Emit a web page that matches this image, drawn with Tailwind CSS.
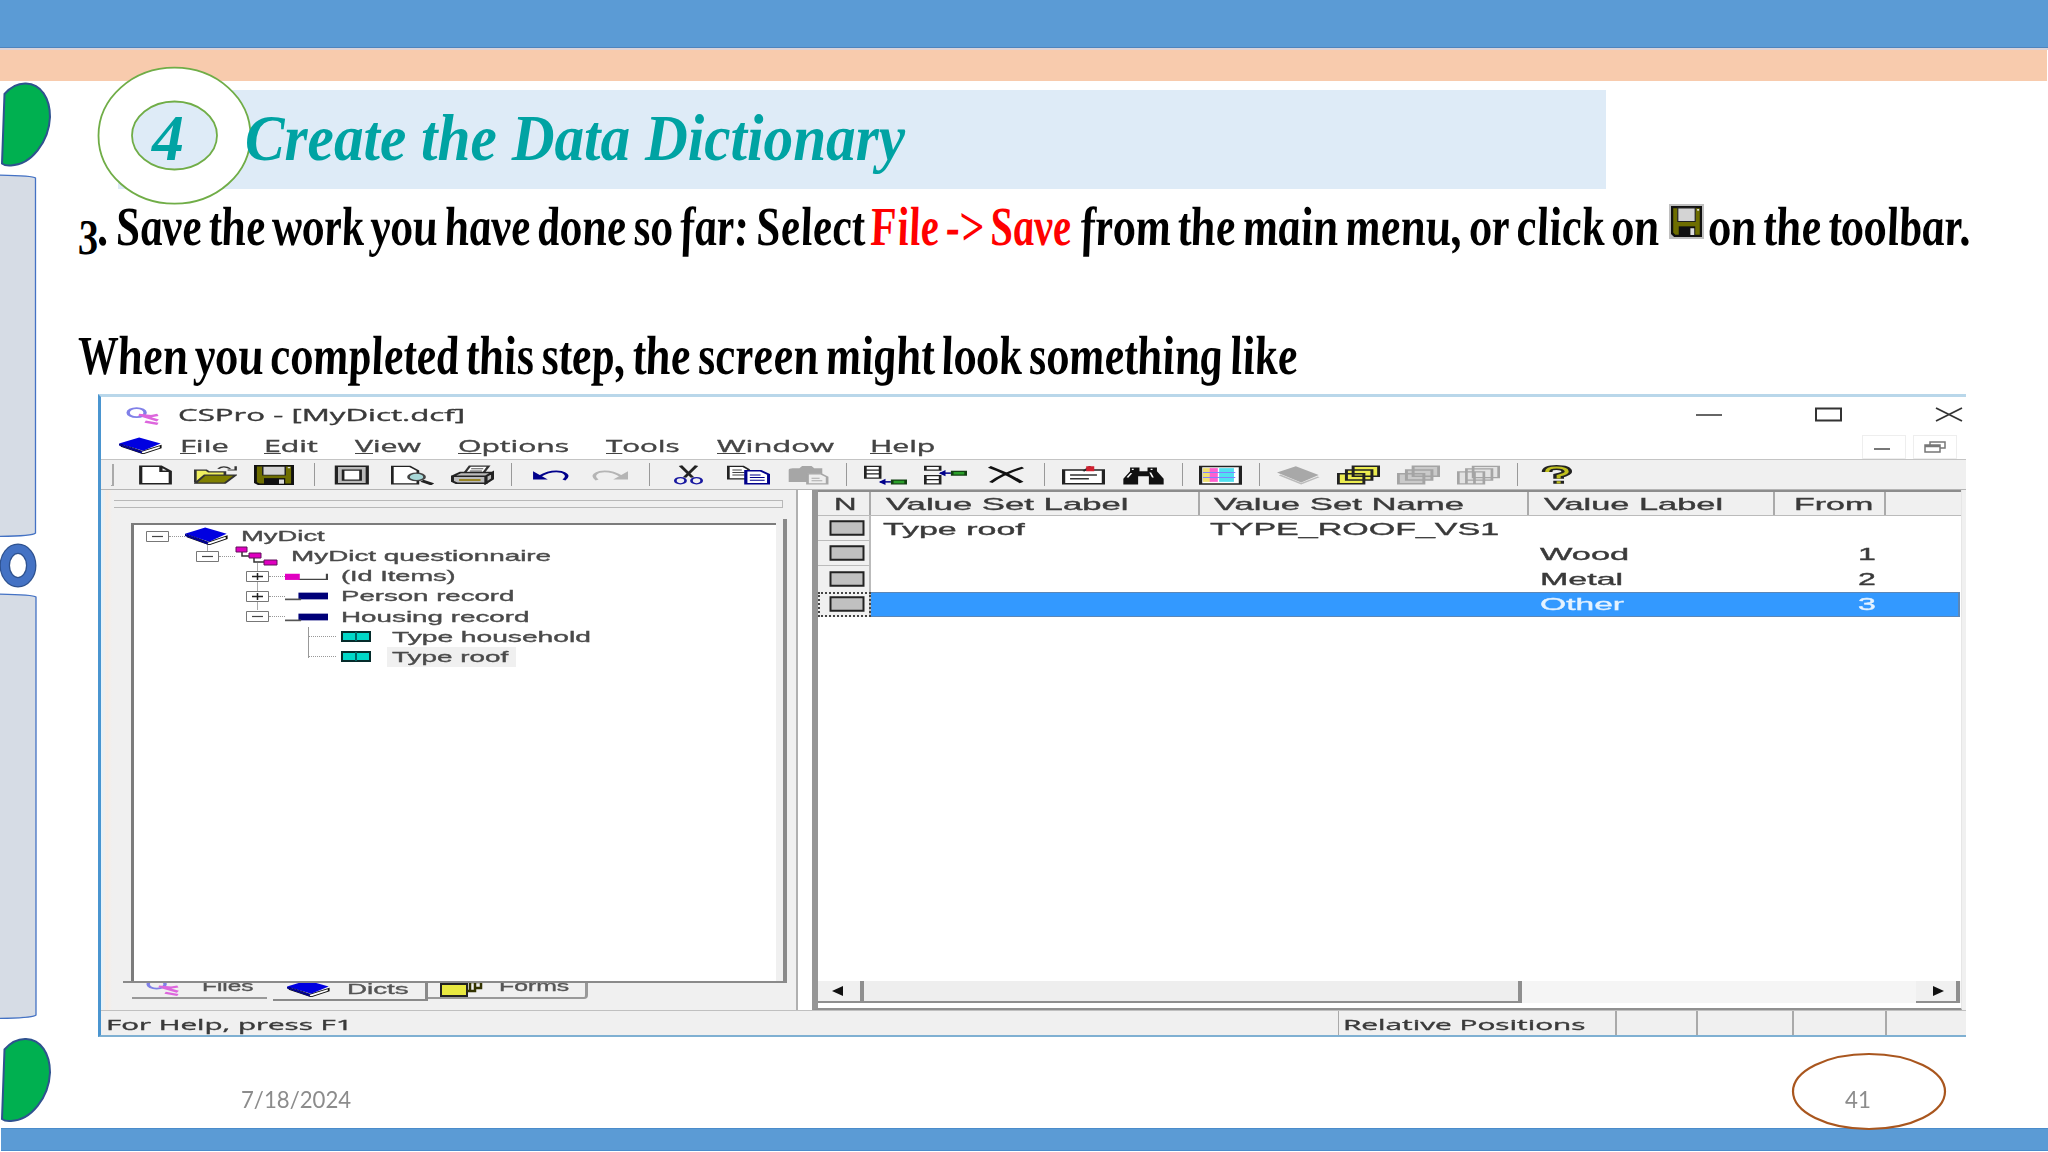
<!DOCTYPE html>
<html lang="en">
<head>
    <meta charset="UTF-8">
    <meta name="viewport" content="width=device-width, initial-scale=1.0">
    <title>Create the Data Dictionary</title>
    <script src="https://cdn.jsdelivr.net/npm/@tailwindcss/browser@4"></script>
</head>
<body class="bg-white">

<!-- shared icons, drawn on a 16x16 grid and stretched wide -->
<svg class="hidden">
    <symbol id="book" viewBox="0 0 16 16" preserveAspectRatio="none">
        <path d="M1 6.5 8.5 13.5 15.5 8V10.5L9 15.8 1 9z" fill="#fff" stroke="#111" stroke-width=".7"/>
        <path d="M0 6 7.5 .5 15.5 6 9 13z" fill="#0000e0"/>
        <path d="M0 6 8.5 13.3V15.6L0 8z" fill="#000090"/>
    </symbol>
    <symbol id="floppy" viewBox="0 0 16 16" preserveAspectRatio="none">
        <path d="M.5 .5h15v15H2L.5 14z" fill="#6e6e00" stroke="#111" stroke-width="1.300"/>
        <path d="M3.5 1h9v7h-9z" fill="#d4d4d4" stroke="#222" stroke-width=".6"/>
        <path d="M4 10.5h8.500v5H4z" fill="#111"/>
        <path d="M10 11.500h2v3.500h-2zM13.500 1.500h1v1h-1z" fill="#ddd"/>
    </symbol>
    <symbol id="key" viewBox="0 0 16 16" preserveAspectRatio="none">
        <ellipse cx="5" cy="5" rx="4" ry="4" fill="none" stroke="#8080e8" stroke-width="1.6"/>
        <path d="M6 7l6 1 3-1M8 8l7 4M9 13l6 2" fill="none" stroke="#dd66dd" stroke-width="2"/>
    </symbol>
    <symbol id="minus" viewBox="0 0 23 11">
        <path d="M.5 .5h22v10H.5z" fill="#fff" stroke="#777"/>
        <path d="M6 5.500h11" stroke="#444" stroke-width="1.200"/>
    </symbol>
    <symbol id="plus" viewBox="0 0 23 11">
        <path d="M.5 .5h22v10H.5z" fill="#fff" stroke="#777"/>
        <path d="M6 5.500h11M11.500 2v7" stroke="#222" stroke-width="1.500"/>
    </symbol>
    <symbol id="item" viewBox="0 0 30 11">
        <path d="M1 1h28v9H1z" fill="#00d8c8" stroke="#052b2b" stroke-width="2"/>
        <path d="M15 1v9" stroke="#066" stroke-width="2"/>
    </symbol>
    <symbol id="record" viewBox="0 0 16 16" preserveAspectRatio="none">
        <path d="M5 5h11v6H5z" fill="#000078"/>
        <path d="M0 11h6" stroke="#555" stroke-width="1.500"/>
    </symbol>
    <symbol id="cell" viewBox="0 0 36 16">
        <path d="M1.500 1.200h33v13.600h-33z" fill="#c0c0c0" stroke="#222" stroke-width="2"/>
    </symbol>
    <symbol id="cards" viewBox="0 0 16 16" preserveAspectRatio="none">
        <path d="M6 1h9.500v8H6zM3.500 4H13v8H3.500zM.5 7H10v8H.5z" stroke-width="1.100"/>
    </symbol>
</svg>

<div class="relative w-[2048px] h-[1152px] overflow-hidden flex flex-col">
    <div class="h-12 shrink-0 bg-[#5b9bd5] border-b border-[#4f84bd]"></div>
    <div class="h-[2px] shrink-0 bg-[#dcd3d8]"></div>
    <div class="h-[31px] mr-px shrink-0 bg-[#f8cbad]"></div>

    <!-- heading band -->
    <div class="mt-[9px] ml-[118px] w-[1488px] h-[99px] shrink-0 bg-[#deebf7]"></div>

    <!-- body text -->
    <div class="mt-[6px] h-16 shrink-0 flex items-center leading-[64px] text-[55px] font-bold italic [word-spacing:-5px] font-['Liberation_Serif',serif] text-black">
        <span class="fit ml-[79px]" data-w="787" data-skew="7"><span class="inline-block translate-y-[9px] text-[50px]">3</span>. Save the work you have done so far: Select</span>
        <span class="fit ml-[5px] text-[#ff0000]" data-w="202" data-skew="7">File -&gt; Save</span>
        <span class="fit ml-[9px]" data-w="579" data-skew="7">from the main menu, or click on</span>
        <svg class="ml-[8px] mb-[11px] w-[35px] h-[35px] bg-[#c0c0c0] p-[2px]"><use href="#floppy"/></svg>
        <span class="fit ml-[6px]" data-w="263" data-skew="7">on the toolbar.</span>
    </div>
    <div class="mt-[65px] h-16 shrink-0 flex items-center leading-[64px] text-[55px] font-bold italic [word-spacing:-5px] font-['Liberation_Serif',serif] text-black">
        <span class="fit ml-[79px]" data-w="1220" data-skew="7">When you completed this step, the screen might look something like</span>
    </div>

    <!-- CSPro window -->
    <div class="mt-[6px] ml-[98px] w-[1868px] h-[643px] shrink-0 flex flex-col bg-white border-l-[3px] border-l-[#4a95d0] border-t-[3px] border-t-[#b9d7ea] border-b-2 border-b-[#7fb0d2] font-['Liberation_Sans',sans-serif] text-[#3a3a3a] [-webkit-text-stroke:0.35px] blur-[0.6px]">
        <div class="h-[37px] shrink-0 flex items-center text-[16px] font-['Open_Sans',sans-serif]">
            <svg class="ml-[25px] w-[34px] h-[18px]"><use href="#key"/></svg>
            <span class="fit ml-[18px] -mt-[2px]" data-w="287">CSPro - [MyDict.dcf]</span>
            <svg class="ml-auto mr-[3px] mb-[3px] w-[268px] h-[15px]" viewBox="0 0 268 15" fill="none" stroke="#333">
                <path d="M1 8h26" stroke-width="1.500"/>
                <path d="M121 1.500h25v12h-25z" stroke-width="2"/>
                <path d="M241 1l26 13M267 1l-26 13" stroke-width="1.800"/>
            </svg>
        </div>
        <div class="h-[25px] shrink-0 flex items-center text-[16px] leading-6 font-['Open_Sans',sans-serif] text-[#444]">
            <svg class="ml-[18px] mb-[3px] w-[43px] h-[17px]"><use href="#book"/></svg>
            <span class="fit ml-[18px] -mt-[2px]" data-w="48"><u>F</u>ile</span>
            <span class="fit ml-[36px] -mt-[2px]" data-w="53"><u>E</u>dit</span>
            <span class="fit ml-[37px] -mt-[2px]" data-w="66"><u>V</u>iew</span>
            <span class="fit ml-[37px] -mt-[2px]" data-w="111"><u>O</u>ptions</span>
            <span class="fit ml-[37px] -mt-[2px]" data-w="74"><u>T</u>ools</span>
            <span class="fit ml-[37px] -mt-[2px]" data-w="116"><u>W</u>indow</span>
            <span class="fit ml-[37px] -mt-[2px]" data-w="66"><u>H</u>elp</span>
            <div class="ml-auto h-[24px] w-[44px] border border-[#eee] flex items-center justify-center"><div class="mt-1 mr-1 w-[16px] h-[2px] bg-[#777]"></div></div>
            <div class="ml-[7px] mr-[9px] h-[24px] w-[44px] border border-[#eee] flex items-center justify-center">
                <svg class="w-[22px] h-[12px]" viewBox="0 0 22 12" fill="none" stroke="#777" stroke-width="1.500"><path d="M6 4V1h15v6h-5M1 4h15v7H1zM1 5.500h15"/></svg>
            </div>
        </div>

        <!-- toolbar -->
        <div class="h-[31px] shrink-0 flex items-center gap-[16.9px] bg-[#f0f0f0] border-t border-t-[#c4c4c4] border-b border-b-[#b5b5b5]">
            <div class="ml-[10px] -mr-[1px] w-[3px] h-[22px] border-r-2 border-b border-[#aaa]"></div>
            <!-- new, open, save -->
            <svg class="ml-[4px] w-[43px] h-5" viewBox="0 0 16 16" preserveAspectRatio="none"><path d="M2.500 1h7.500l3.500 4v10h-11zM10 1v4h3.500" fill="#fff" stroke="#222" stroke-width="1.200"/></svg>
            <svg class="w-[43px] h-5" viewBox="0 0 16 16" preserveAspectRatio="none">
                <path d="M.5 14V4h4l1 1.500h6V8" fill="#f0f060" stroke="#333"/>
                <path d="M.5 14.500 4 8h11.500l-4 6.500z" fill="#808000" stroke="#333"/>
                <path d="M9 3q2-3 4.500 0M15.500 1v3h-3" fill="none" stroke="#333" stroke-width=".9"/>
            </svg>
            <svg class="w-[40px] mr-[3px] h-5"><use href="#floppy"/></svg>
            <div class="w-px h-[23px] bg-[#999]"></div>
            <!-- full screen, preview, print -->
            <svg class="w-[43px] h-5" viewBox="0 0 16 16" preserveAspectRatio="none"><path d="M2 1h11.500v14H2z" fill="#bbb" stroke="#222" stroke-width="1.200"/><path d="M4.500 4h6.500v8H4.500z" fill="#fff" stroke="#222"/></svg>
            <svg class="w-[43px] h-5" viewBox="0 0 16 16" preserveAspectRatio="none">
                <path d="M.5 1H7l3 3.500V15H.5z" fill="#fff" stroke="#222"/>
                <path d="M11.500 12.500 15.500 15.500" stroke="#222" stroke-width="2"/>
                <circle cx="9.500" cy="9.500" r="3" fill="#a8d8d8" stroke="#444"/>
            </svg>
            <svg class="w-[43px] h-5" viewBox="0 0 16 16" preserveAspectRatio="none">
                <path d="M5 6.500 7 .8h7L12 6.500" fill="#fff" stroke="#333"/>
                <path d="M7.500 3h4.500M7 4.800h4.500" stroke="#555" stroke-width=".7"/>
                <path d="M.5 9 3.500 6h12L13 9zM.5 9H13v5.500H2L.5 13zM13 9l2.500-3v5L13 14.500z" fill="#bbb" stroke="#222" stroke-width="1.200"/>
                <path d="M3 12h8" stroke="#907800" stroke-width="1.300"/>
            </svg>
            <div class="w-px h-[23px] bg-[#999]"></div>
            <!-- undo, redo -->
            <svg class="w-[43px] h-5" viewBox="0 0 16 16" preserveAspectRatio="none"><path d="M1.500 5v6.500H7z" fill="#00008b"/><path d="M4 9Q8 4 12 5.500 15.500 8 13 12" fill="none" stroke="#00008b" stroke-width="1.300"/></svg>
            <svg class="w-[43px] h-5" viewBox="0 0 16 16" preserveAspectRatio="none"><path d="M14.500 5v6.500H9z" fill="#b5b5b5"/><path d="M12 9Q8 4 4 5.500 .5 8 3 12" fill="none" stroke="#b5b5b5" stroke-width="1.300"/></svg>
            <div class="w-px h-[23px] bg-[#999]"></div>
            <!-- cut, copy, paste -->
            <svg class="w-[43px] h-5" viewBox="0 0 16 16" preserveAspectRatio="none">
                <path d="M5 .5 9.500 10M11 .5 6.500 10" stroke="#222" stroke-width="1.400"/>
                <ellipse cx="5" cy="12.500" rx="1.900" ry="2.500" fill="none" stroke="#1818a0"/><ellipse cx="11" cy="12.500" rx="1.900" ry="2.500" fill="none" stroke="#1818a0"/>
            </svg>
            <svg class="w-[43px] h-5" viewBox="0 0 16 16" preserveAspectRatio="none">
                <path d="M.5 1H6l2 2.500V11H.5z" fill="#fff" stroke="#222"/><path d="M2 4h3.500M2 6h4.500M2 8h4.500" stroke="#444" stroke-width=".9"/>
                <path d="M7 4.500h5.500l3 3V15H7z" fill="#fff" stroke="#00008b" stroke-width="1.200"/><path d="M8.500 8h4M8.500 10h5.500M8.500 12.200h5.500" stroke="#00008b" stroke-width=".9"/>
            </svg>
            <svg class="w-[43px] h-5" viewBox="0 0 16 16" preserveAspectRatio="none"><path d="M1 4Q1 2.500 2.500 2.500h2.500l1-1.700h3.500l1 1.700h3v11H1z" fill="#a6a6a6"/><path d="M8 7h5l2.300 2.500V15H8z" fill="#eee" stroke="#a6a6a6"/><path d="M9.500 10.500h3M9.500 12.500h4" stroke="#aaa" stroke-width=".8"/></svg>
            <div class="w-px h-[23px] bg-[#999]"></div>
            <!-- add, insert, delete -->
            <svg class="w-[43px] h-5" viewBox="0 0 16 16" preserveAspectRatio="none">
                <path d="M.5 1H6v9.500H.5zM.5 4H6M.5 7H6" fill="#fff" stroke="#222"/>
                <path d="M6 13.500h4" stroke="#00008b" stroke-width="1.200"/><path d="M5.500 13.500 8 11v5z" fill="#00008b"/><path d="M10.500 12h5v3h-5z" fill="#2aa02a" stroke="#124012"/>
            </svg>
            <svg class="w-[43px] h-5" viewBox="0 0 16 16" preserveAspectRatio="none">
                <path d="M.5 1H6v3H.5zM.5 8.500H6V15H.5zM.5 11.700H6" fill="#fff" stroke="#222"/>
                <path d="M6 6.500h4" stroke="#00008b" stroke-width="1.200"/><path d="M5.500 6.500 8 4v5z" fill="#00008b"/><path d="M10.500 5h5v3h-5z" fill="#2aa02a" stroke="#124012"/>
            </svg>
            <svg class="w-[43px] h-5" viewBox="0 0 16 16" preserveAspectRatio="none"><path d="M2 1.500Q8 6 14 14" fill="none" stroke="#111" stroke-width="1.800"/><path d="M14.500 2Q7 7 2.500 14" fill="none" stroke="#111" stroke-width="1.500"/></svg>
            <div class="w-px h-[23px] bg-[#999]"></div>
            <!-- properties, find -->
            <svg class="w-[43px] h-5" viewBox="0 0 16 16" preserveAspectRatio="none"><path d="M.6 4h14.800v11H.6z" fill="#fff" stroke="#222" stroke-width="1.200"/><path d="M3 8h10M3 11h7" stroke="#333" stroke-width="1.100"/><path d="M8 5 10.500 1" stroke="#222"/><path d="M9 1h3v4H9z" fill="#d02030"/></svg>
            <svg class="w-[43px] h-5" viewBox="0 0 16 16" preserveAspectRatio="none"><path d="M3 2h3.500v3h3V2H13v3l2.500 6v4.500H10V9H6v6.500H.5V11L3 5z" fill="#111"/><path d="M3.500 6.500 2 10M10.500 6l1 4M4 3v1M11 3v1" stroke="#fff" stroke-width=".7"/></svg>
            <div class="w-px h-[23px] bg-[#999]"></div>
            <!-- value set colours -->
            <svg class="w-[43px] h-5" viewBox="0 0 16 16" preserveAspectRatio="none">
                <path d="M.6 1.200h14.800v14H.6z" fill="#fff" stroke="#222" stroke-width="1.200"/>
                <path d="M1.500 2.500h3v11h-3z" fill="#f0e070"/><path d="M4 2.500h3v11H4z" fill="#ff60d0"/><path d="M7.500 2.500h5.500v11H7.500z" fill="#50e0f0"/>
                <path d="M1.500 6h12M1.500 10h12" stroke="#8080ff" stroke-width=".9"/>
            </svg>
            <div class="w-px h-[23px] bg-[#999]"></div>
            <!-- dictionary, forms, tables -->
            <svg class="w-[43px] h-5" viewBox="0 0 16 16" preserveAspectRatio="none"><path d="M0 6 7 1l8.500 7L9 14z" fill="#a8a8a8"/><path d="M1 8l8 7 6.500-5.500" fill="none" stroke="#bbb"/></svg>
            <svg class="w-[43px] h-5 fill-[#ecec50] stroke-[#222]"><use href="#cards"/></svg>
            <svg class="w-[43px] h-5 fill-[#cacaca] stroke-[#a4a4a4]"><use href="#cards"/></svg>
            <svg class="w-[43px] h-5 fill-[#e2e2e2] stroke-[#a4a4a4]" viewBox="0 0 16 16" preserveAspectRatio="none"><path d="M6 1h9.500v9H6zM3.500 3H13v9H3.500zM.5 5.500H10V15H.5zM3.500 5.500V15M6.500 5.500V15"/></svg>
            <div class="w-px h-[23px] bg-[#999]"></div>
            <svg class="w-[43px] h-5" viewBox="0 0 16 16" preserveAspectRatio="none">
                <path d="M4.500 5.500Q4.500 2 8 2T11.800 5Q12 7 8.800 8.500V11M8.800 12.500v2.500" fill="none" stroke="#222" stroke-width="4"/>
                <path d="M4.500 5.500Q4.500 2 8 2T11.800 5Q12 7 8.800 8.500V10.800M8.800 13v1.700" fill="none" stroke="#c0c020" stroke-width="1.500"/>
            </svg>
        </div>

        <!-- panes -->
        <div class="h-[520px] shrink-0 flex bg-[#f0f0f0]">
            <div class="w-[697px] flex flex-col border-r-2 border-[#b0b0b0] bg-linear-to-r from-[#e6f2fa] from-0% via-[#f7ece4] via-[6px] to-[#f0f0f0] to-[11px]">
                <div class="mt-[10px] ml-[13px] w-[669px] h-[8px] shrink-0 border-y border-r border-[#b8b8b8]"></div>
                <div class="mt-[15px] ml-[30px] flex h-[458px] shrink-0">
                    <div class="w-[645px] bg-white border-l-[3px] border-t-2 border-[#7c7c7c] pt-[1px] text-[15px] leading-[20.15px] text-[#4a4a4a]">
                        <div class="flex items-center h-[20.15px] pl-[12px]">
                            <svg class="w-[23px] h-[11px]"><use href="#minus"/></svg>
                            <div class="w-4 border-t border-dotted border-[#999]"></div>
                            <svg class="w-[43px] h-[18px]"><use href="#book"/></svg>
                            <span class="fit ml-[13px]" data-w="84">MyDict</span>
                        </div>
                        <div class="flex items-center h-[20.15px] pl-[62px]">
                            <svg class="w-[23px] h-[11px] overflow-visible"><path d="M11.500-6v6" stroke="#aaa"/><use href="#minus"/></svg>
                            <div class="w-4 border-t border-dotted border-[#999]"></div>
                            <svg class="w-[43px] h-[20px]" viewBox="0 0 43 20"><path d="M7 5v5h12v6h12" fill="none" stroke="#333" stroke-width="1.500"/><path d="M1 1h11v5H1zM14 7h12v5H14zM29 14h13v5H29z" fill="#e000c0" stroke="#60105a"/></svg>
                            <span class="fit ml-[13px]" data-w="260">MyDict questionnaire</span>
                        </div>
                        <div class="flex items-center h-[20.15px] pl-[112px]">
                            <svg class="w-[23px] h-[11px] overflow-visible"><path d="M11.500-8v27" stroke="#aaa"/><use href="#plus"/></svg>
                            <div class="w-4 border-t border-dotted border-[#999]"></div>
                            <svg class="w-[43px] h-[18px]" viewBox="0 0 16 16" preserveAspectRatio="none"><path d="M5 11h10.700V6" fill="none" stroke="#444"/><path d="M0 6h5.500v5.500H0z" fill="#e000c0"/></svg>
                            <span class="fit ml-[13px]" data-w="114">(Id Items)</span>
                        </div>
                        <div class="flex items-center h-[20.15px] pl-[112px]">
                            <svg class="w-[23px] h-[11px] overflow-visible"><path d="M11.500-8v27" stroke="#aaa"/><use href="#plus"/></svg>
                            <div class="w-4 border-t border-dotted border-[#999]"></div>
                            <svg class="w-[43px] h-[18px]"><use href="#record"/></svg>
                            <span class="fit ml-[13px]" data-w="173">Person record</span>
                        </div>
                        <div class="flex items-center h-[20.15px] pl-[112px]">
                            <svg class="w-[23px] h-[11px]"><use href="#minus"/></svg>
                            <div class="w-4 border-t border-dotted border-[#999]"></div>
                            <svg class="w-[43px] h-[18px]"><use href="#record"/></svg>
                            <span class="fit ml-[13px]" data-w="189">Housing record</span>
                        </div>
                        <div class="flex items-center h-[20.15px] pl-[174px]">
                            <div class="self-stretch border-l border-[#999]"></div>
                            <div class="w-[27px] border-t border-dotted border-[#999]"></div>
                            <svg class="ml-[5px] w-[30px] h-[11px]"><use href="#item"/></svg>
                            <span class="fit ml-[21px]" data-w="199">Type household</span>
                        </div>
                        <div class="flex items-center h-[20.15px] pl-[174px]">
                            <div class="self-start h-[11px] border-l border-[#999]"></div>
                            <div class="w-[27px] border-t border-dotted border-[#999]"></div>
                            <svg class="ml-[5px] w-[30px] h-[11px]"><use href="#item"/></svg>
                            <div class="ml-[16px] pl-[5px] pr-[7px] bg-[#f0f0f0] flex"><span class="fit" data-w="117">Type roof</span></div>
                        </div>
                    </div>
                    <div class="ml-[7px] -mt-[4px] w-[4px] bg-[#8a8a8a]"></div>
                </div>
                <!-- tabs, cut off by the tree's lower edge -->
                <div class="ml-[22px] w-[664px] h-[20px] border-t-2 border-[#8a8a8a] flex items-start text-[15px] leading-[15px] text-[#555]">
                    <div class="ml-[9px] w-[135px] h-[16px] border-b-2 border-[#999] flex overflow-hidden">
                        <svg class="ml-[14px] -mt-[4px] w-[34px] h-[17px] shrink-0"><use href="#key"/></svg>
                        <span class="fit ml-[22px] -mt-[5px]" data-w="52">Files</span>
                    </div>
                    <div class="ml-[6px] w-[155px] h-[18px] border-b-2 border-r-[3px] border-[#8a8a8a] flex overflow-hidden">
                        <svg class="ml-[14px] -mt-[3px] w-[43px] h-[17px] shrink-0"><use href="#book"/></svg>
                        <span class="fit ml-[17px] -mt-[2px]" data-w="61">Dicts</span>
                    </div>
                    <div class="w-[160px] h-[16px] border-b-2 border-r-[3px] border-[#999] rounded-br flex overflow-hidden">
                        <svg class="ml-[12px] -mt-[1px] w-[44px] h-[15px] shrink-0" viewBox="0 0 44 15"><path d="M1 2h26v12H1z" fill="#e8e840" stroke="#222" stroke-width="2"/><path d="M30 9V0h11v6h-5M27 9h8V0" fill="none" stroke="#333300" stroke-width="2.500"/></svg>
                        <span class="fit ml-[15px] -mt-[5px]" data-w="71">Forms</span>
                    </div>
                </div>
            </div>
            <div class="w-[14px] bg-white"></div>

            <!-- value set grid -->
            <div class="w-[1150px] flex flex-col border-l-[6px] border-[#969696] bg-white border-r border-r-[#e6e6e6] text-[17px] border-b-2 border-b-[#909090]">
                <div class="h-[26px] shrink-0 flex items-center bg-[#f0f0f0] border-t-2 border-t-[#8c8c8c] border-b border-b-[#bbb] leading-[25px]">
                    <div class="w-[53px] h-full border-r-2 border-[#aaa] flex pl-[16px]"><span class="fit" data-w="22">N</span></div>
                    <div class="w-[329px] h-full border-r-2 border-[#aaa] flex pl-[15px]"><span class="fit" data-w="243">Value Set Label</span></div>
                    <div class="w-[329px] h-full border-r-2 border-[#aaa] flex pl-[14px]"><span class="fit" data-w="251">Value Set Name</span></div>
                    <div class="w-[246px] h-full border-r-2 border-[#aaa] flex pl-[15px]"><span class="fit" data-w="180">Value Label</span></div>
                    <div class="w-[111px] h-full border-r-2 border-[#aaa] flex pl-[19px]"><span class="fit" data-w="80">From</span></div>
                </div>
                <div class="h-[25.200px] shrink-0 flex items-center leading-[27px]">
                    <div class="w-[53px] shrink-0 h-full border-r-2 border-b border-[#bbb] bg-[#f0f0f0] flex items-center pl-[11px]"><svg class="w-[36px] h-[16px]"><use href="#cell"/></svg></div>
                    <span class="fit ml-[12px] pt-px" data-w="142">Type roof</span>
                    <span class="fit ml-[185px] pt-px" data-w="290">TYPE_ROOF_VS1</span>
                </div>
                <div class="h-[25.200px] shrink-0 flex items-center">
                    <div class="w-[53px] shrink-0 h-full border-r-2 border-b border-[#bbb] bg-[#f0f0f0] flex items-center pl-[11px]"><svg class="w-[36px] h-[16px]"><use href="#cell"/></svg></div>
                    <span class="fit ml-[669px] pt-[2px]" data-w="89">Wood</span>
                    <span class="fit ml-auto pt-[2px]" data-w="17" data-r="86">1</span>
                </div>
                <div class="h-[25.200px] shrink-0 flex items-center">
                    <div class="w-[53px] shrink-0 h-full border-r-2 border-[#bbb] bg-[#f0f0f0] flex items-center pl-[11px]"><svg class="w-[36px] h-[16px]"><use href="#cell"/></svg></div>
                    <span class="fit ml-[669px] pt-[2px]" data-w="84">Metal</span>
                    <span class="fit ml-auto pt-[2px]" data-w="17" data-r="86">2</span>
                </div>
                <div class="h-[25.200px] shrink-0 flex items-center mr-[1px] bg-[#3399ff] text-[#e6f3ff] border-y border-r-2 border-[#5b87b8]">
                    <div class="w-[53px] shrink-0 h-[25px] border-r-2 border-[#bbb] bg-[#f0f0f0] outline-2 -outline-offset-2 outline-dotted outline-[#444] flex items-center pl-[11px]"><svg class="w-[36px] h-[16px]"><use href="#cell"/></svg></div>
                    <span class="fit ml-[669px] pt-[2px]" data-w="85">Other</span>
                    <span class="fit ml-auto pt-[2px]" data-w="17" data-r="83">3</span>
                </div>
                <div class="grow"></div>
                <!-- horizontal scrollbar -->
                <div class="h-[22px] mb-[5px] shrink-0 flex bg-[#f5f5f5]">
                    <div class="w-[46px] bg-[#f0f0f0] border-r-4 border-b-2 border-[#8f8f8f] flex items-center pl-[14px]"><svg class="w-[11px] h-[10px]"><path d="M0 5 11 0v10z" fill="#111"/></svg></div>
                    <div class="w-[658px] bg-[#eee] border-r-4 border-b-2 border-[#8f8f8f]"></div>
                    <div class="ml-auto mr-[1px] w-[44px] bg-[#f0f0f0] border-r-4 border-b-2 border-[#8f8f8f] flex items-center pl-[17px]"><svg class="w-[11px] h-[10px]"><path d="M11 5 0 0v10z" fill="#111"/></svg></div>
                </div>
            </div>
        </div>

        <!-- status bar -->
        <div class="h-[25px] shrink-0 flex items-center bg-[#f0f0f0] border-t border-[#c0c0c0] text-[15px] leading-[20px] font-['Open_Sans',sans-serif]">
            <span class="fit ml-[5px] pt-[2px]" data-w="246">For Help, press F1</span>
            <div class="ml-auto h-full w-[277px] border-l border-[#aaa] flex items-center"><span class="fit ml-[4px] pt-[2px]" data-w="242">Relative Positions</span></div>
            <div class="h-full w-[81px] border-l-2 border-[#aaa]"></div>
            <div class="h-full w-[96px] border-l-2 border-[#aaa]"></div>
            <div class="h-full w-[93px] border-l-2 border-[#aaa]"></div>
            <div class="h-full w-[81px] border-l-2 border-[#aaa]"></div>
        </div>
    </div>

    <!-- footer -->
    <div class="grow flex items-end pb-[12px] pl-[241px] pr-[177px] justify-between text-[24px] leading-[34px] text-[#8c8c8c] font-['Lato',sans-serif]">
        <div class="flex"><span class="fit" data-w="110">7/18/2024</span></div>
        <div class="flex"><span class="fit" data-w="26">41</span></div>
    </div>
    <div class="ml-px h-[23px] shrink-0 mb-px bg-[#5b9bd5] border-y border-[#4a8ccb]"></div>

    <!-- slide shapes lying over the page -->
    <svg class="absolute inset-0 w-[2048px] h-[1152px]" viewBox="0 0 2048 1152">
        <path id="leaf" d="M4.500 94Q14 83 26 83.500C41 84 50 98 50 117 49 142 31 165 11 165.500Q5 166 2 163.500z" fill="#00b050" stroke="#2f528f" stroke-width="2"/>
        <use href="#leaf" y="955.500"/>
        <path d="M-2 175Q33 175.500 35.500 178V533Q33 536 -2 536.500zM-2 594Q33 594.500 36 597V1015Q33 1018-2 1018.500z" fill="#d6dce5" stroke="#4472c4" stroke-width="1.300"/>
        <ellipse cx="18" cy="565.500" rx="13.200" ry="16.700" fill="none" stroke="#2f528f" stroke-width="10.500"/>
        <ellipse cx="18" cy="565.500" rx="13.200" ry="16.700" fill="none" stroke="#4472c4" stroke-width="8"/>
        <ellipse cx="174.500" cy="135.700" rx="76" ry="68" fill="#fff" stroke="#70ad47" stroke-width="1.800"/>
        <ellipse cx="174.500" cy="135.500" rx="42.500" ry="34" fill="#deebf7" stroke="#70ad47" stroke-width="1.800"/>
        <ellipse cx="1869" cy="1091.500" rx="76" ry="37.500" fill="none" stroke="#a9561e" stroke-width="2.200"/>
    </svg>

    <!-- heading text, above the ring -->
    <h1 class="absolute top-[88px] left-[152px] flex text-[66px] leading-[99px] font-bold italic text-[#00a3a3] font-['Liberation_Serif',serif]">
        <span class="fit" data-w="32">4</span>
        <span class="fit ml-[61px]" data-w="660">Create the Data Dictionary</span>
    </h1>
</div>

<script>
    // Stretch or squeeze each label to its width
    function fit(el) {
        const natural = el.offsetWidth;
        const width = Number(el.dataset.w);
        const right = Number(el.dataset.r || 0);
        const skew = el.dataset.skew ? ` skewX(${el.dataset.skew}deg)` : "";
        if (!natural) return;
        el.style.transform = `scaleX(${width / natural})${skew}`;
        el.style.marginRight = `${width - natural + right}px`;
    }

    // the observer runs again when a font or the stylesheet changes a label's size
    const observer = new ResizeObserver((entries) => entries.forEach((entry) => fit(entry.target)));

    document.querySelectorAll(".fit").forEach((el) => {
        el.style.display = "block";
        el.style.width = "max-content";
        el.style.whiteSpace = "nowrap";
        el.style.flexShrink = "0";
        el.style.transformOrigin = "0 78%";
        observer.observe(el);
    });
    window.addEventListener("load", () => document.querySelectorAll(".fit").forEach(fit));
</script>

</body>
</html>
